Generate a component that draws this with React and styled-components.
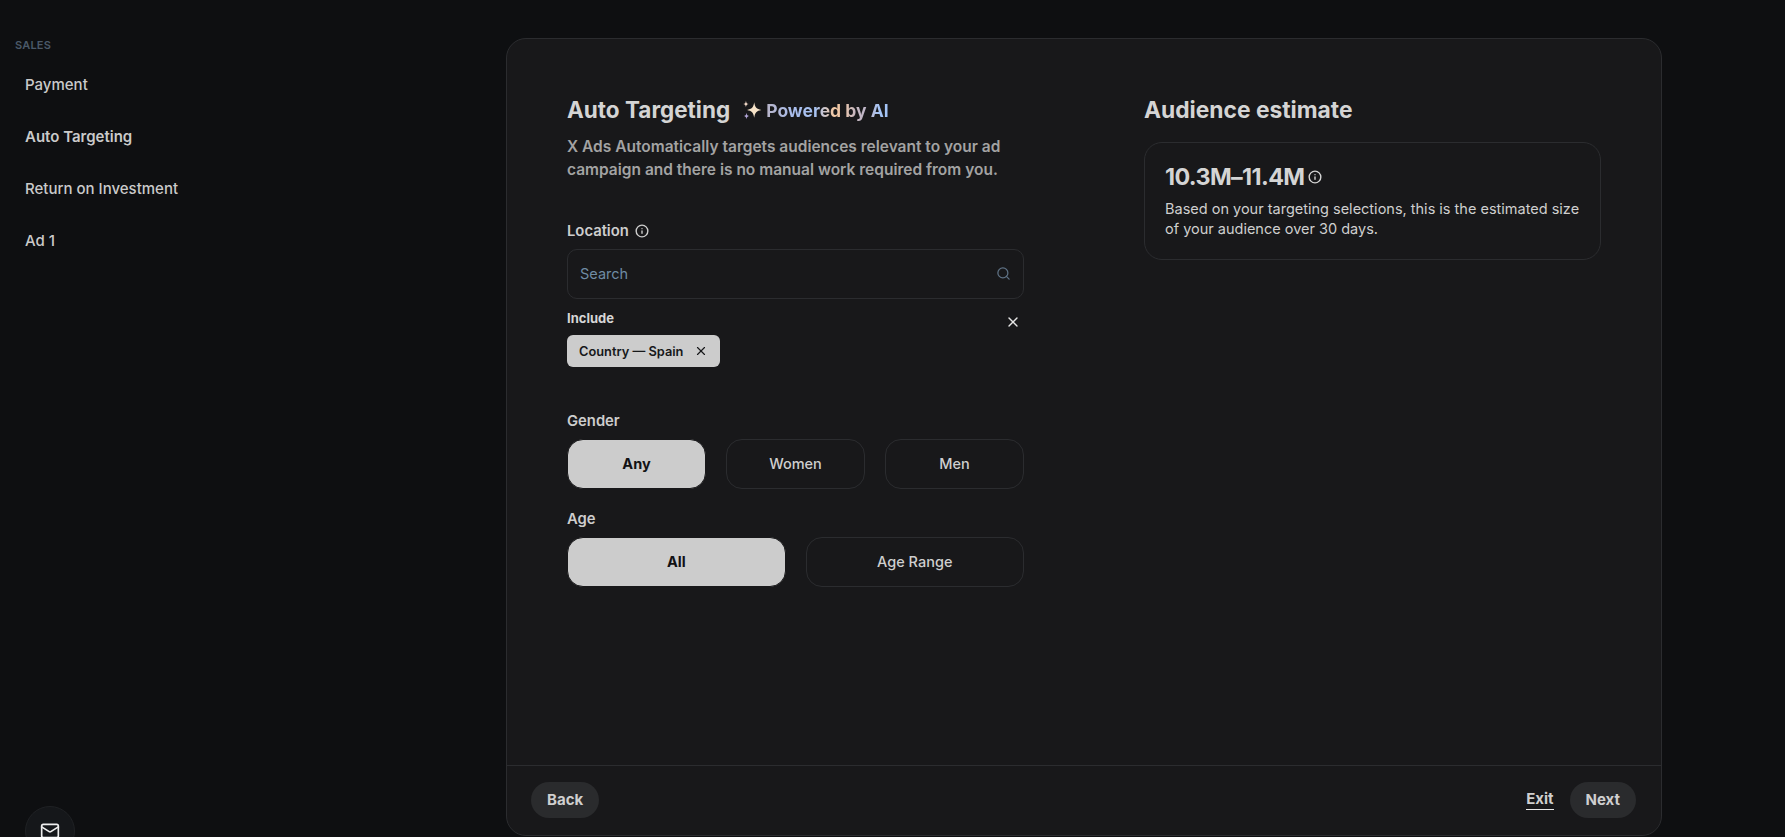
import React from 'react'
import styled, { createGlobalStyle } from 'styled-components'
import { Info, Search, X, Mail } from 'lucide-react'

const GlobalStyle = createGlobalStyle`
  html, body {
    margin: 0;
    padding: 0;
    background: #0e0f11;
  }
  body {
    font-family: Inter, "Noto Sans", sans-serif;
    color: #d0d0d0;
  }
  * {
    box-sizing: border-box;
  }
`

const Shell = styled.div`
  display: flex;
  height: 100vh;
  overflow: hidden;
  background: #0e0f11;
`

const Sidebar = styled.aside`
  width: 506px;
  flex-shrink: 0;
  height: 872px;
  display: flex;
  flex-direction: column;
  padding: 38px 0 16px 15px;
`

const SectionLabel = styled.div`
  font-size: 11px;
  line-height: 14px;
  font-weight: 600;
  letter-spacing: 0.2px;
  color: #4a5968;
  margin-bottom: 6px;
`

const NavItem = styled.div`
  height: 52px;
  display: flex;
  align-items: center;
  padding-left: 10px;
  font-size: 15px;
  font-weight: ${p => (p.$active ? 600 : 500)};
  color: #cacaca;
`

const RoundButton = styled.div`
  width: 50px;
  height: 50px;
  margin: auto 0 0 10px;
  border-radius: 50%;
  border: 1px solid #1f2124;
  background: #15171a;
  color: #eeeeee;
  display: flex;
  align-items: center;
  justify-content: center;
`

const Panel = styled.main`
  width: 1156px;
  height: 798px;
  margin-top: 38px;
  flex-shrink: 0;
  display: flex;
  flex-direction: column;
  background: #18181a;
  border: 1px solid #2b2c2f;
  border-radius: 20px;
`

const PanelBody = styled.div`
  flex: 1;
  display: grid;
  grid-template-columns: 457px 457px;
  column-gap: 120px;
  padding: 56px 0 0 60px;
`

const Column = styled.section`
  display: flex;
  flex-direction: column;
`

const TitleRow = styled.div`
  display: flex;
  align-items: center;
  height: 30px;
`

const Title = styled.h1`
  margin: 0;
  font-size: 22.5px;
  line-height: 30px;
  font-weight: 700;
  color: #d4d4d4;
`

const Heading = styled.h2`
  margin: 0;
  font-size: 22.8px;
  line-height: 30px;
  font-weight: 700;
  color: #d4d4d4;
`

const Sparkle = styled.svg`
  width: 22px;
  height: 22px;
  margin-left: 11px;
  margin-right: 3px;
`

const Powered = styled.span`
  font-size: 17.5px;
  font-weight: 700;
  background: linear-gradient(90deg, #b8b4c8 0%, #a9bdec 22%, #a6c2f2 40%, #f3c9a5 55%, #f0c8a8 62%, #c8b8c0 72%, #bcb6cc 84%, #a4c4f6 92%);
  -webkit-background-clip: text;
  background-clip: text;
  color: transparent;
`

const Description = styled.p`
  margin: 10px 0 0;
  font-size: 15.5px;
  line-height: 23px;
  font-weight: 600;
  color: #a3a3a3;
`

const Label = styled.div`
  display: flex;
  align-items: center;
  gap: 6px;
  font-size: 14.8px;
  line-height: 20px;
  font-weight: 600;
  color: #cdcdcd;
  margin-top: ${p => p.$top}px;
`

const InputBox = styled.div`
  height: 50px;
  margin-top: 8px;
  display: flex;
  align-items: center;
  justify-content: space-between;
  padding: 0 12px 1px 12px;
  border: 1px solid #2b2c2f;
  border-radius: 10px;
  color: #5f7285;
`

const SearchInput = styled.input`
  flex: 1;
  min-width: 0;
  padding: 0;
  border: none;
  outline: none;
  background: transparent;
  font-family: inherit;
  font-size: 14.5px;
  color: #d0d0d0;
  &::placeholder {
    color: #6f8ba3;
    opacity: 1;
  }
`

const IncludeHead = styled.div`
  height: 21px;
  margin-top: 10px;
  display: flex;
  justify-content: space-between;
  align-items: flex-start;
  padding-right: 3px;
  color: #e6e6e6;
  svg {
    margin-top: 5px;
  }
`

const IncludeLabel = styled.div`
  font-size: 13px;
  line-height: 18px;
  font-weight: 700;
  color: #d6d6d6;
`

const Chip = styled.div`
  align-self: flex-start;
  height: 32px;
  margin-top: 5px;
  padding: 0 12px;
  display: flex;
  align-items: center;
  gap: 11px;
  background: #cccccc;
  border-radius: 6px;
  font-size: 12.8px;
  font-weight: 600;
  color: #17181a;
`

const Options = styled.div`
  display: grid;
  grid-template-columns: repeat(${p => p.$count}, 1fr);
  column-gap: ${p => p.$gap}px;
  margin-top: 8px;
`

const Option = styled.div`
  height: 50px;
  padding-bottom: 1px;
  display: flex;
  align-items: center;
  justify-content: center;
  border-radius: 16px;
  font-size: 14.5px;
  font-weight: ${p => (p.$selected ? 700 : 500)};
  color: ${p => (p.$selected ? '#121214' : '#cfcfcf')};
  background: ${p => (p.$selected ? '#cccccc' : 'transparent')};
  border: 1px solid ${p => (p.$selected ? '#18181a' : '#2b2c2f')};
`

const Card = styled.div`
  margin-top: 17px;
  height: 118px;
  padding: 19px 20px;
  border: 1px solid #2b2c2f;
  border-radius: 18px;
`

const Estimate = styled.div`
  display: flex;
  align-items: center;
  gap: 4px;
  height: 30px;
  padding-bottom: 1px;
  font-size: 23.3px;
  font-weight: 700;
  letter-spacing: -0.6px;
  color: #d4d4d4;
`

const CardText = styled.p`
  margin: 7px 0 0;
  font-size: 14.5px;
  line-height: 20px;
  font-weight: 400;
  color: #cfcfcf;
`

const Footer = styled.footer`
  height: 70px;
  flex-shrink: 0;
  display: flex;
  align-items: center;
  justify-content: space-between;
  padding: 0 25px 2px 24px;
  border-top: 1px solid #2b2c2f;
`

const FooterActions = styled.div`
  display: flex;
  align-items: center;
  gap: 16px;
`

const PillButton = styled.div`
  height: 36px;
  padding: 0 16px;
  display: flex;
  align-items: center;
  border-radius: 18px;
  background: #2a2b2d;
  font-size: 15px;
  font-weight: 700;
  color: #cfcfcf;
`

const ExitLink = styled.div`
  font-size: 15px;
  line-height: 20px;
  font-weight: 700;
  color: #cfcfcf;
  border-bottom: 1px solid #e8e8e8;
`

function SparkleIcon() {
  return (
    <Sparkle viewBox="0 0 20 20">
      <path d="M12 3 C12.7 7.6 14.2 9.2 18.5 10 C14.2 10.8 12.7 12.4 12 17 C11.3 12.4 9.8 10.8 5.5 10 C9.8 9.2 11.3 7.6 12 3 Z" fill="#f6e2c8" />
      <path d="M4.5 1.5 C4.8 3.6 5.4 4.2 7 4.5 C5.4 4.8 4.8 5.4 4.5 7.5 C4.2 5.4 3.6 4.8 2 4.5 C3.6 4.2 4.2 3.6 4.5 1.5 Z" fill="#f2d9c8" />
      <path d="M5 12.5 C5.3 14.6 5.9 15.2 7.6 15.5 C5.9 15.8 5.3 16.4 5 18.5 C4.7 16.4 4.1 15.8 2.4 15.5 C4.1 15.2 4.7 14.6 5 12.5 Z" fill="#b6a9dc" />
    </Sparkle>
  )
}

const navItems = ['Payment', 'Auto Targeting', 'Return on Investment', 'Ad 1']

export default function App() {
  return (
    <>
      <GlobalStyle />
      <Shell>
        <Sidebar>
          <SectionLabel>SALES</SectionLabel>
          {navItems.map(item => (
            <NavItem key={item} $active={item === 'Auto Targeting'}>
              {item}
            </NavItem>
          ))}
          <RoundButton>
            <Mail size={20} strokeWidth={2} />
          </RoundButton>
        </Sidebar>
        <Panel>
          <PanelBody>
            <Column>
              <TitleRow>
                <Title>Auto Targeting</Title>
                <SparkleIcon />
                <Powered>Powered by AI</Powered>
              </TitleRow>
              <Description>
                X Ads Automatically targets audiences relevant to your ad campaign and there is no manual work required from you.
              </Description>
              <Label $top={40}>
                Location
                <Info size={14} strokeWidth={2.4} />
              </Label>
              <InputBox>
                <SearchInput placeholder="Search" />
                <Search size={15} strokeWidth={2} />
              </InputBox>
              <IncludeHead>
                <IncludeLabel>Include</IncludeLabel>
                <X size={16} strokeWidth={2} />
              </IncludeHead>
              <Chip>
                Country — Spain
                <X size={14} strokeWidth={2} />
              </Chip>
              <Label $top={44}>Gender</Label>
              <Options $count={3} $gap={20}>
                <Option $selected>Any</Option>
                <Option>Women</Option>
                <Option>Men</Option>
              </Options>
              <Label $top={20}>Age</Label>
              <Options $count={2} $gap={20}>
                <Option $selected>All</Option>
                <Option>Age Range</Option>
              </Options>
            </Column>
            <Column>
              <Heading>Audience estimate</Heading>
              <Card>
                <Estimate>
                  10.3M–11.4M
                  <Info size={14} strokeWidth={2.4} />
                </Estimate>
                <CardText>
                  Based on your targeting selections, this is the estimated size of your audience over 30 days.
                </CardText>
              </Card>
            </Column>
          </PanelBody>
          <Footer>
            <PillButton>Back</PillButton>
            <FooterActions>
              <ExitLink>Exit</ExitLink>
              <PillButton>Next</PillButton>
            </FooterActions>
          </Footer>
        </Panel>
      </Shell>
    </>
  )
}
